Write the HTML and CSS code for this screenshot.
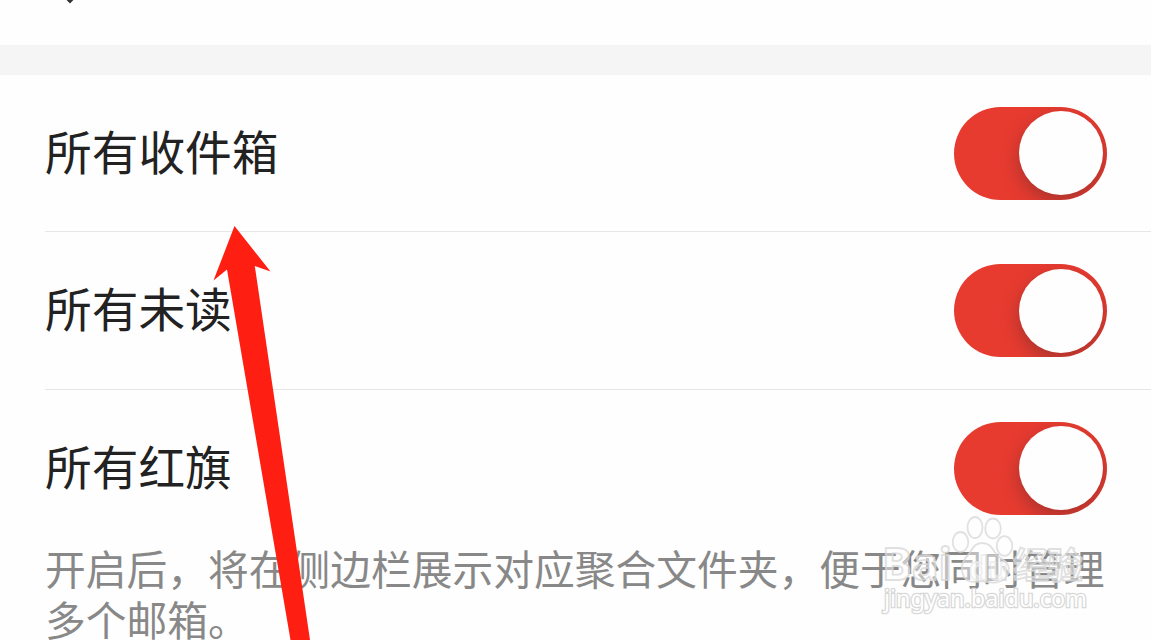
FILE: index.html
```html
<!DOCTYPE html>
<html lang="zh-CN">
<head>
    <meta charset="UTF-8">
    <meta name="viewport" content="width=device-width, initial-scale=1.0">
    <title>邮箱设置</title>
    <link rel="stylesheet" href="styles.css">
</head>
<body>
    <div class="page">
        <header class="header">
            <svg class="back" width="12" height="4" viewBox="0 0 12 4">
                <path d="M1.5 -3.5 L6 1 L10.5 -3.5" fill="none" stroke="#333" stroke-width="3.4"/>
            </svg>
        </header>

        <main class="settings">
            <div class="row">
                <span class="label">所有收件箱</span>
                <span class="toggle"><span class="knob"></span></span>
            </div>
            <div class="row">
                <span class="label">所有未读</span>
                <span class="toggle"><span class="knob"></span></span>
            </div>
            <div class="row last">
                <span class="label">所有红旗</span>
                <span class="toggle"><span class="knob"></span></span>
            </div>
            <p class="hint">开启后，将在侧边栏展示对应聚合文件夹，便于您同时管理<br>多个邮箱。</p>
        </main>

        <svg class="arrow" width="1151" height="640" viewBox="0 0 1151 640">
            <polygon points="234.5,226 270.5,271.5 254.8,266 310,640 290.5,640 227,269.5 213.5,280.5"/>
        </svg>

        <svg class="watermark" width="220" height="110" viewBox="0 0 220 110">
            <g class="brand">
                <text x="2" y="72" font-size="44" textLength="70" lengthAdjust="spacingAndGlyphs">Bai</text>
                <text x="89" y="72" font-size="32" textLength="39" lengthAdjust="spacingAndGlyphs">du</text>
                <text class="cn" x="133" y="71" font-size="36" textLength="70">经验</text>
            </g>
            <g class="paw">
                <ellipse cx="80.500" cy="34" rx="7.800" ry="10"/>
                <ellipse cx="95" cy="19.500" rx="7.500" ry="10.500"/>
                <ellipse cx="113" cy="20.500" rx="7.800" ry="10"/>
                <ellipse cx="124.500" cy="38" rx="7.800" ry="9.800"/>
                <path d="M102 35 C94 35 92 42 88 47 C83 52 81 57 82 63 C84 75 93 75 102 73 C111 75 123 77 128 66 C131 57 126 53 119 49 C113 45 113 35 102 35 Z"/>
            </g>
            <text class="url" x="4" y="99" font-size="23.5" textLength="203" lengthAdjust="spacingAndGlyphs">jingyan.baidu.com</text>
        </svg>
    </div>
</body>
</html>
```
FILE: styles.css
```css
* {
    margin: 0;
    padding: 0;
    box-sizing: border-box;
}

body {
    background: #fefefe;
    font-family: "Noto Sans CJK SC", sans-serif;
}

.page {
    position: relative;
    width: 1151px;
    height: 640px;
    overflow: hidden;
}

.header {
    height: 75px;
    padding-left: 64px;
    border-bottom: 30px solid #f5f5f5;
}

.back {
    display: block;
}

.settings {
    padding-left: 45px;
}

.row {
    display: flex;
    justify-content: space-between;
    align-items: center;
    height: 157.4px;
    padding-right: 44px;
    border-bottom: 1px solid #e6e6e6;
}

.row.last {
    height: 152px;
    padding-top: 5px;
    border-bottom: none;
}

.label {
    padding-bottom: 7px;
    color: #222;
    font-size: 46.7px;
    line-height: 64px;
}

.toggle {
    display: flex;
    justify-content: flex-end;
    width: 153px;
    height: 93px;
    padding: 4.5px 4.3px;
    border-radius: 47px;
    background: #e83b30;
    overflow: hidden;
}

.knob {
    width: 84px;
    height: 84px;
    border-radius: 50%;
    background: #fefefe;
    box-shadow: 0 7px 18px rgba(70, 40, 40, 0.4);
}

.hint {
    color: #888;
    font-size: 40.75px;
    line-height: 51px;
    white-space: nowrap;
}

.arrow {
    position: absolute;
    top: 0;
    left: 0;
    fill: #ff1f12;
}

.watermark {
    position: absolute;
    top: 508px;
    left: 880px;
    font-family: "Noto Sans", sans-serif;
    fill: rgba(255, 255, 255, 0.45);
    stroke: rgba(215, 215, 215, 0.75);
    stroke-width: 1.8;
}

.brand {
    font-weight: bold;
}

.cn {
    font-family: "Noto Sans CJK SC", sans-serif;
}

.url {
    fill: #fefefe;
    stroke: #d8d8d8;
    stroke-width: 2.6;
    paint-order: stroke;
}
```
